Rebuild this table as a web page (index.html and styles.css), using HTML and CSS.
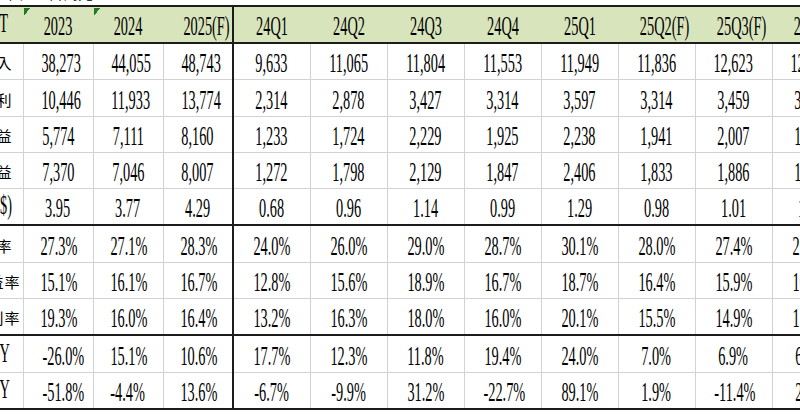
FILE: index.html
```html
<!DOCTYPE html>
<html lang="zh-Hant">
<head>
<meta charset="utf-8">
<title>財務數據</title>
<link rel="stylesheet" href="styles.css">
</head>
<body>
<div class="sheet">
  <div class="caption"><p>單位：百萬元</p></div>
  <table class="grid">
    <colgroup>
      <col class="c-lbl"><col class="c-yr"><col class="c-yr"><col class="c-yr">
      <col class="c-q"><col class="c-q"><col class="c-q"><col class="c-q">
      <col class="c-q"><col class="c-q"><col class="c-q"><col class="c-q">
    </colgroup>
    <thead>
      <tr>
        <th class="lbl">百萬<span class="sx">NT</span></th>
        <th class="flag"><span class="sx">2023</span></th>
        <th class="flag"><span class="sx">2024</span></th>
        <th><span class="sx">2025(F)</span></th>
        <th class="sep"><span class="sx">24Q1</span></th>
        <th><span class="sx">24Q2</span></th>
        <th><span class="sx">24Q3</span></th>
        <th><span class="sx">24Q4</span></th>
        <th><span class="sx">25Q1</span></th>
        <th><span class="sx">25Q2(F)</span></th>
        <th><span class="sx">25Q3(F)</span></th>
        <th><span class="sx">25Q4(F)</span></th>
      </tr>
    </thead>
    <tbody>
      <tr>
        <th class="lbl">營業收入</th>
        <td><span class="sx">38,273</span></td><td><span class="sx">44,055</span></td><td><span class="sx">48,743</span></td>
        <td class="sep"><span class="sx">9,633</span></td><td><span class="sx">11,065</span></td><td><span class="sx">11,804</span></td><td><span class="sx">11,553</span></td>
        <td><span class="sx">11,949</span></td><td><span class="sx">11,836</span></td><td><span class="sx">12,623</span></td><td><span class="sx">12,335</span></td>
      </tr>
      <tr>
        <th class="lbl">營業毛利</th>
        <td><span class="sx">10,446</span></td><td><span class="sx">11,933</span></td><td><span class="sx">13,774</span></td>
        <td class="sep"><span class="sx">2,314</span></td><td><span class="sx">2,878</span></td><td><span class="sx">3,427</span></td><td><span class="sx">3,314</span></td>
        <td><span class="sx">3,597</span></td><td><span class="sx">3,314</span></td><td><span class="sx">3,459</span></td><td><span class="sx">3,404</span></td>
      </tr>
      <tr>
        <th class="lbl">營業利益</th>
        <td><span class="sx">5,774</span></td><td><span class="sx">7,111</span></td><td><span class="sx">8,160</span></td>
        <td class="sep"><span class="sx">1,233</span></td><td><span class="sx">1,724</span></td><td><span class="sx">2,229</span></td><td><span class="sx">1,925</span></td>
        <td><span class="sx">2,238</span></td><td><span class="sx">1,941</span></td><td><span class="sx">2,007</span></td><td><span class="sx">1,974</span></td>
      </tr>
      <tr>
        <th class="lbl">稅後損益</th>
        <td><span class="sx">7,370</span></td><td><span class="sx">7,046</span></td><td><span class="sx">8,007</span></td>
        <td class="sep"><span class="sx">1,272</span></td><td><span class="sx">1,798</span></td><td><span class="sx">2,129</span></td><td><span class="sx">1,847</span></td>
        <td><span class="sx">2,406</span></td><td><span class="sx">1,833</span></td><td><span class="sx">1,886</span></td><td><span class="sx">1,882</span></td>
      </tr>
      <tr>
        <th class="lbl"><span class="sx">EPS(NT$)</span></th>
        <td><span class="sx">3.95</span></td><td><span class="sx">3.77</span></td><td><span class="sx">4.29</span></td>
        <td class="sep"><span class="sx">0.68</span></td><td><span class="sx">0.96</span></td><td><span class="sx">1.14</span></td><td><span class="sx">0.99</span></td>
        <td><span class="sx">1.29</span></td><td><span class="sx">0.98</span></td><td><span class="sx">1.01</span></td><td><span class="sx">1.01</span></td>
      </tr>
      <tr class="sec">
        <th class="lbl">毛利率</th>
        <td><span class="sx">27.3%</span></td><td><span class="sx">27.1%</span></td><td><span class="sx">28.3%</span></td>
        <td class="sep"><span class="sx">24.0%</span></td><td><span class="sx">26.0%</span></td><td><span class="sx">29.0%</span></td><td><span class="sx">28.7%</span></td>
        <td><span class="sx">30.1%</span></td><td><span class="sx">28.0%</span></td><td><span class="sx">27.4%</span></td><td><span class="sx">27.6%</span></td>
      </tr>
      <tr>
        <th class="lbl wide">營業利益率</th>
        <td><span class="sx">15.1%</span></td><td><span class="sx">16.1%</span></td><td><span class="sx">16.7%</span></td>
        <td class="sep"><span class="sx">12.8%</span></td><td><span class="sx">15.6%</span></td><td><span class="sx">18.9%</span></td><td><span class="sx">16.7%</span></td>
        <td><span class="sx">18.7%</span></td><td><span class="sx">16.4%</span></td><td><span class="sx">15.9%</span></td><td><span class="sx">16.0%</span></td>
      </tr>
      <tr>
        <th class="lbl wide">稅後淨利率</th>
        <td><span class="sx">19.3%</span></td><td><span class="sx">16.0%</span></td><td><span class="sx">16.4%</span></td>
        <td class="sep"><span class="sx">13.2%</span></td><td><span class="sx">16.3%</span></td><td><span class="sx">18.0%</span></td><td><span class="sx">16.0%</span></td>
        <td><span class="sx">20.1%</span></td><td><span class="sx">15.5%</span></td><td><span class="sx">14.9%</span></td><td><span class="sx">15.3%</span></td>
      </tr>
      <tr class="sec">
        <th class="lbl yoy">營收<span class="sx">YoY</span></th>
        <td><span class="sx">-26.0%</span></td><td><span class="sx">15.1%</span></td><td><span class="sx">10.6%</span></td>
        <td class="sep"><span class="sx">17.7%</span></td><td><span class="sx">12.3%</span></td><td><span class="sx">11.8%</span></td><td><span class="sx">19.4%</span></td>
        <td><span class="sx">24.0%</span></td><td><span class="sx">7.0%</span></td><td><span class="sx">6.9%</span></td><td><span class="sx">6.8%</span></td>
      </tr>
      <tr class="last">
        <th class="lbl yoy">稅後<span class="sx">YoY</span></th>
        <td><span class="sx">-51.8%</span></td><td><span class="sx">-4.4%</span></td><td><span class="sx">13.6%</span></td>
        <td class="sep"><span class="sx">-6.7%</span></td><td><span class="sx">-9.9%</span></td><td><span class="sx">31.2%</span></td><td><span class="sx">-22.7%</span></td>
        <td><span class="sx">89.1%</span></td><td><span class="sx">1.9%</span></td><td><span class="sx">-11.4%</span></td><td><span class="sx">2.1%</span></td>
      </tr>
    </tbody>
  </table>
</div>
</body>
</html>
```

FILE: styles.css
```css
html, body {
  margin: 0;
  padding: 0;
  background: #ffffff;
}

.sheet {
  width: 800px;
  height: 420px;
  overflow: hidden;
  background: #ffffff;
}

.caption {
  height: 5px;
  overflow: hidden;
}

.caption p {
  margin: -16px 0 0 3px;
  font: 15px/18px "Noto Sans CJK TC", sans-serif;
  color: #333;
  white-space: nowrap;
}

.grid {
  margin-left: -107px;
  width: 956px;
  table-layout: fixed;
  border-collapse: collapse;
  font-family: "Liberation Serif", "Noto Sans CJK TC", serif;
  font-size: 27px;
  color: #000;
}

.c-lbl { width: 130px; }
.c-yr { width: 70px; }
.c-q { width: 77px; }

.grid th,
.grid td {
  padding: 0 0 4px 0;
  text-align: center;
  vertical-align: bottom;
  line-height: 24px;
  white-space: nowrap;
  font-weight: normal;
}

.grid thead th {
  height: 31px;
  background: #d8e4bc;
  border-top: 2px solid #1c1c1c;
  border-bottom: 2px solid #1c1c1c;
}

.grid thead th.flag {
  background:
    linear-gradient(to bottom right, #1f7a22 50%, transparent 50%) 1px 1px / 6px 8px no-repeat,
    #d8e4bc;
}

.grid tbody td,
.grid tbody th {
  height: 31.3px;
  border: 1px solid #d2d2d2;
}

.grid tbody th.lbl {
  border-left: none;
}

.grid th.lbl {
  font: 15px/24px "Noto Sans CJK TC", sans-serif;
  text-align: right;
  padding-right: 11px;
}

.grid thead th.lbl {
  padding-right: 15px;
}

.grid tbody th.yoy {
  padding-right: 13px;
}

.grid tbody th.wide {
  padding-right: 2px;
  letter-spacing: 1px;
}

.grid th.lbl .sx {
  transform-origin: 100% 50%;
}

.grid .sep,
.grid tbody td.sep {
  border-left: 2px solid #1c1c1c;
}

.grid tr.sec td,
.grid tr.sec th {
  border-top: 2px solid #1c1c1c;
}

.grid tr.last td,
.grid tr.last th {
  border-bottom: 2px solid #1c1c1c;
}

.sx {
  display: inline-block;
  font-family: "Liberation Serif", serif;
  font-size: 27px;
  line-height: 24px;
  letter-spacing: 0;
  transform: scaleX(0.53);
  transform-origin: 50% 50%;
}
```
